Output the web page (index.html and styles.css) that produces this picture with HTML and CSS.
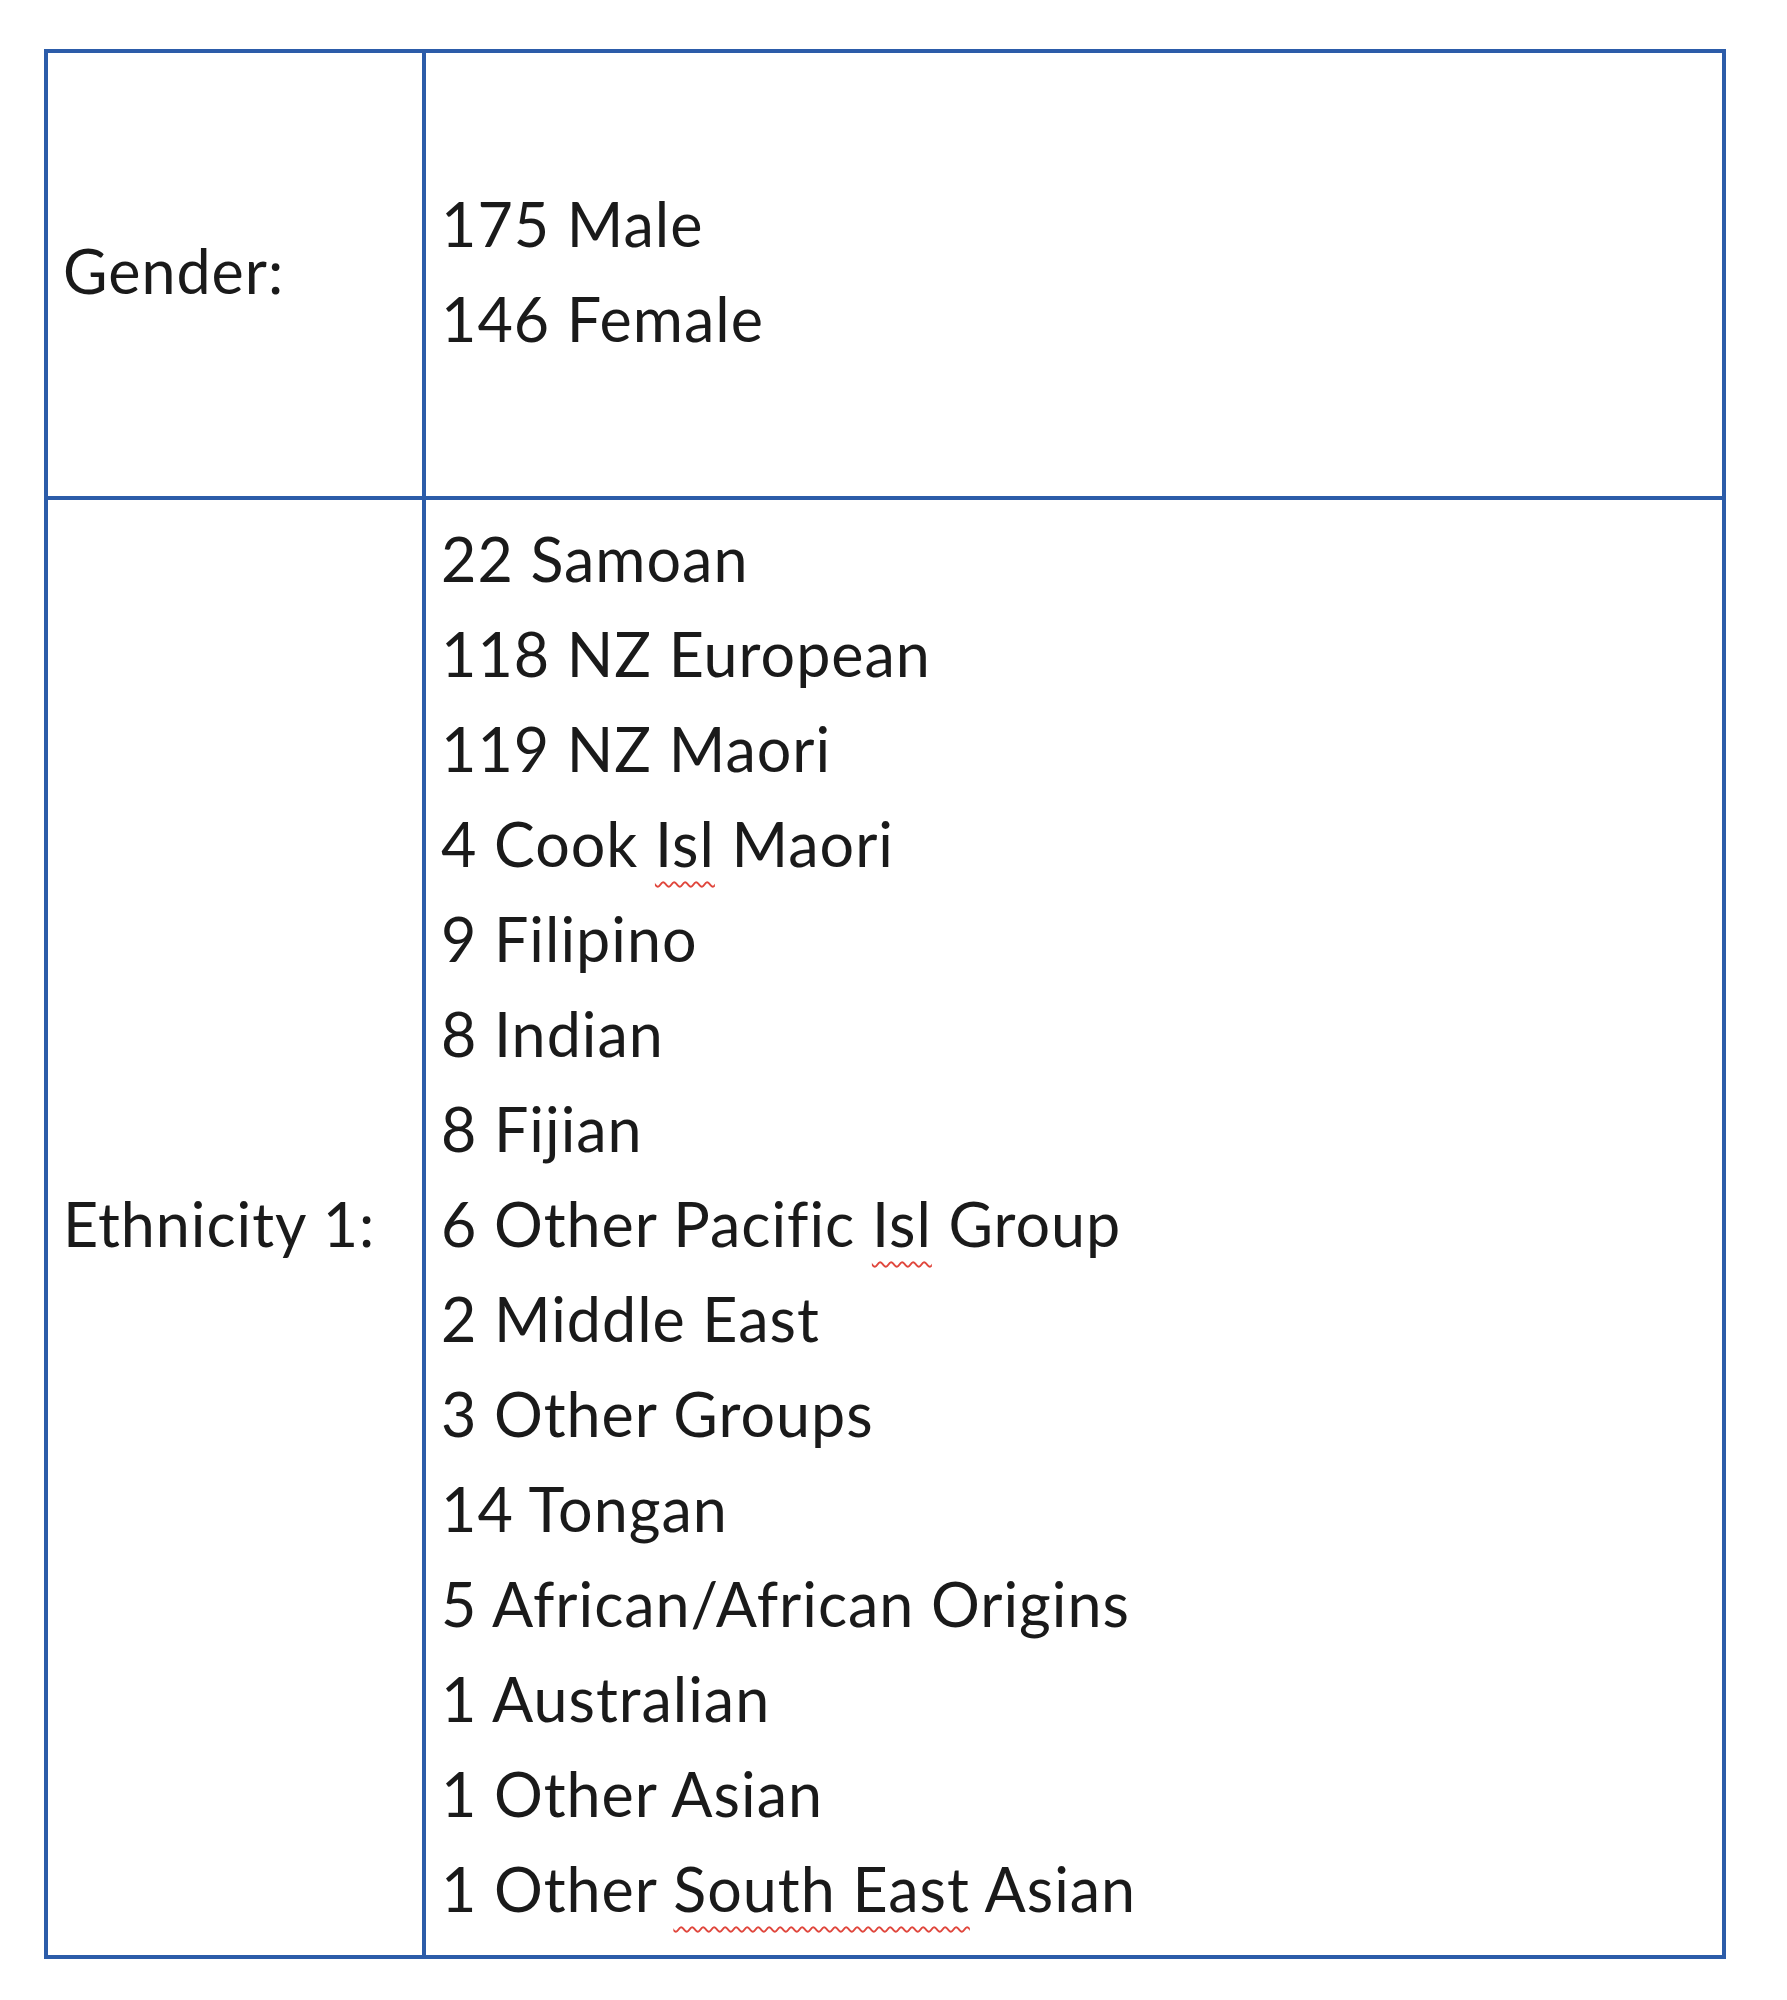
FILE: index.html
```html
<!DOCTYPE html>
<html lang="en">
<head>
<meta charset="utf-8">
<title>Demographics</title>
<link rel="stylesheet" href="styles.css">
</head>
<body>
<div class="page">
  <table class="stats">
    <tr class="row-gender">
      <td class="label">Gender:</td>
      <td class="values">
        <div class="line">175 Male</div>
        <div class="line">146 Female</div>
      </td>
    </tr>
    <tr class="row-eth">
      <td class="label">Ethnicity 1:</td>
      <td class="values">
        <div class="line">22 Samoan</div>
        <div class="line">118 NZ European</div>
        <div class="line">119 NZ Maori</div>
        <div class="line">4 Cook <span class="spell">Isl</span> Maori</div>
        <div class="line">9 Filipino</div>
        <div class="line">8 Indian</div>
        <div class="line">8 Fijian</div>
        <div class="line">6 Other Pacific <span class="spell">Isl</span> Group</div>
        <div class="line">2 Middle East</div>
        <div class="line">3 Other Groups</div>
        <div class="line">14 Tongan</div>
        <div class="line">5 African/African Origins</div>
        <div class="line">1 Australian</div>
        <div class="line">1 Other Asian</div>
        <div class="line">1 Other <span class="spell">South East</span> Asian</div>
      </td>
    </tr>
  </table>
</div>
</body>
</html>
```
FILE: styles.css
```css
html, body {
  margin: 0;
  padding: 0;
  background: #ffffff;
}

.page {
  padding: 49px 0 0 44px;
  font-family: "Lato", "Liberation Sans", sans-serif;
  color: #1a1a1a;
}

.stats {
  border-collapse: separate;
  border-spacing: 0;
  border: 4px solid #2c5ca9;
  width: 1682px;
  font-size: 61px;
  line-height: 95px;
  letter-spacing: 1px;
}

.stats td {
  vertical-align: middle;
}

.label {
  width: 359px;
  padding-left: 15px;
  padding-right: 0;
  border-right: 4px solid #2c5ca9;
}

.values {
  padding-left: 15px;
  padding-right: 0;
}

.row-gender td {
  height: 435px;
  padding-top: 0;
  padding-bottom: 8px;
  border-bottom: 4px solid #2c5ca9;
}

.row-eth td {
  padding-top: 11px;
  padding-bottom: 19px;
}

.line {
  white-space: nowrap;
}

.spell {
  text-decoration: underline wavy #e0463c;
  text-decoration-thickness: 2px;
  text-underline-offset: 14px;
  text-decoration-skip-ink: none;
}
```
